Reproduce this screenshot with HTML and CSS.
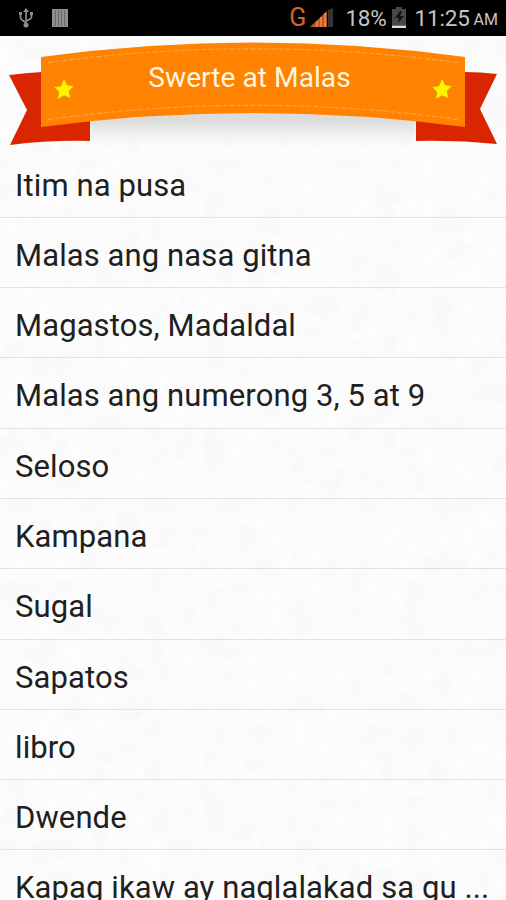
FILE: index.html
```html
<!DOCTYPE html>
<html lang="tl">
<head>
<meta charset="utf-8">
<title>Swerte at Malas</title>
<link rel="stylesheet" href="styles.css">
</head>
<body>
<svg class="paper" width="506" height="864" aria-hidden="true">
  <filter id="grain" x="0" y="0" width="100%" height="100%">
    <feTurbulence type="turbulence" baseFrequency="0.035" numOctaves="3" seed="8"/>
    <feColorMatrix values="0 0 0 0 .7  0 0 0 0 .7  0 0 0 0 .7  .2 0 0 0 -.01"/>
  </filter>
  <rect width="506" height="864" filter="url(#grain)"/>
</svg>
<div class="screen">
  <div class="status">
    <svg class="usb" width="16" height="22" viewBox="0 0 16 22" fill="none" stroke="#8c8c8c" stroke-width="1.700">
      <path d="M8 3v15M2.500 7v3.500q0 2 5.500 5M13.500 7v3q0 2-5.500 4"/>
      <path d="M8 1l3 4H5zM1 5h3v3H1zM12 5h3v3h-3z" fill="#8c8c8c" stroke="none"/>
      <circle cx="8" cy="18" r="2.500" fill="#8c8c8c" stroke="none"/>
    </svg>
    <svg class="bars" width="16" height="18" viewBox="0 0 16 18">
      <path fill="#909090" d="M0 0h16v18H0z"/>
      <path stroke="#686868" d="M3.500 1v16M6.500 1v16M9.500 1v16M12.500 1v16"/>
    </svg>
    <span class="network">G</span>
    <svg class="signal" width="24" height="20" viewBox="0 0 24 20">
      <path fill="#b65b27" d="M0 19L17 3v16z"/>
      <path stroke="#ee7b3d" stroke-width="2" d="M7 13v6M11 9v10M15 5v14"/>
      <path fill="#303535" d="M18 2l5-2v19h-5z"/>
    </svg>
    <span class="percent">18%</span>
    <svg class="battery" width="16" height="22" viewBox="0 0 16 22">
      <path fill="#484848" d="M5 0h6v2h4v16H1V2h4z"/>
      <path fill="#111" d="M9 4l-5 7h4l-1 5 6-7H9l2-5z"/>
      <path fill="#ddd" d="M1 18.500h14v2.500H1z"/>
    </svg>
    <span class="clock">11:25</span><span class="ampm">AM</span>
  </div>
  <header class="banner">
    <svg class="ribbon" width="506" height="111" viewBox="0 36 506 111" aria-hidden="true">
      <defs>
        <linearGradient id="shade" x1="0" y1="0" x2="0" y2="1">
          <stop offset=".45" stop-color="#dcdcdc"/><stop offset="1" stop-color="#eee" stop-opacity="0"/>
        </linearGradient>
        <filter id="soft"><feGaussianBlur stdDeviation="2"/></filter>
        <path id="star" d="M0-11l3.300 6.900 7.200.9-5.300 5.100 1.400 7.600L0 6.800l-6.600 3.700 1.400-7.600-5.300-5.100 7.200-.9z"/>
      </defs>
      <path d="M90 100H416V147Q253 141 90 147z" fill="url(#shade)" filter="url(#soft)"/>
      <path d="M9 75Q25 73 42 72V118H90V141Q50 140 10 145L27 110z" fill="#da2600"/>
      <path d="M497 74Q481 72 464 72V118H416V141Q457 140 497 144L480 109z" fill="#da2600"/>
      <path d="M41 57Q253 28 465 57V127Q253 99 41 127z" fill="#ff8200"/>
      <path d="M48 62.500Q253 35 458 62.500M48 119.500Q253 91 458 119.500" fill="none" stroke="#ff9f38" stroke-width="1.300" stroke-dasharray="5 2"/>
      <use href="#star" x="64" y="89" fill="#fff200" stroke="#d99500" stroke-width=".8"/>
      <use href="#star" x="442" y="89" fill="#fff200" stroke="#d99500" stroke-width=".8"/>
    </svg>
    <h1 class="title">Swerte at Malas</h1>
  </header>
  <ul class="list">
    <li class="row">Itim na pusa</li>
    <li class="row">Malas ang nasa gitna</li>
    <li class="row">Magastos, Madaldal</li>
    <li class="row">Malas ang numerong 3, 5 at 9</li>
    <li class="row">Seloso</li>
    <li class="row">Kampana</li>
    <li class="row">Sugal</li>
    <li class="row">Sapatos</li>
    <li class="row">libro</li>
    <li class="row">Dwende</li>
    <li class="row">Kapag ikaw ay naglalakad sa gu ...</li>
  </ul>
</div>
</body>
</html>
```
FILE: styles.css
```css
* { box-sizing: border-box; }
body {
  margin: 0;
  height: 900px;
  overflow: hidden;
  background: #fdfdfd;
  font-family: Roboto, "Noto Sans", sans-serif;
}
.paper { position: absolute; left: 0; top: 36px; z-index: -1; }
.screen { height: 900px; overflow: hidden; }
.status {
  display: flex;
  align-items: center;
  height: 35.500px;
  padding: 0 8px 0 18px;
  background: #000;
  color: #c6c6c6;
  line-height: 38px;
  white-space: nowrap;
}
.bars { margin-left: 18px; }
.network { margin-left: auto; color: #ce662e; font-size: 25px; line-height: 34px; }
.signal { margin-left: 4px; }
.percent { margin-left: 11px; font-size: 22.500px; letter-spacing: -.2px; }
.battery { margin: 0 8px 0 4px; }
.clock { font-size: 22.500px; letter-spacing: -.2px; }
.ampm { margin: 5px 0 0 4px; font-size: 16px; }
.banner {
  position: relative;
  display: flex;
  justify-content: center;
  height: 112px;
}
.ribbon { position: absolute; left: 0; top: .5px; }
.title {
  position: relative;
  margin: 24px 0 0;
  padding-right: 7px;
  color: #fff6df;
  font-size: 28.200px;
  font-weight: 400;
  line-height: 36px;
  white-space: nowrap;
}
.list { margin: 0; padding: 0; list-style: none; }
.row {
  height: 70.300px;
  padding: 0 0 0 15px;
  border-bottom: 1px solid #e3e3e3;
  color: #202020;
  font-size: 31px;
  letter-spacing: .1px;
  line-height: 75px;
  white-space: nowrap;
}
```
